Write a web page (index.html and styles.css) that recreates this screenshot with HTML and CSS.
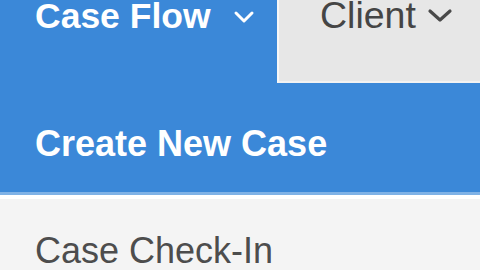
FILE: index.html
```html
<!DOCTYPE html>
<html>
<head>
<meta charset="utf-8">
<link rel="stylesheet" href="styles.css">
</head>
<body>
<div class="screen">
  <div class="tabs">
    <div class="tab tab-active">
      <span class="tab-label">Case Flow</span>
      <svg class="chev" width="22" height="14" viewBox="0 0 22 14"><path d="M3 3 L11 11 L19 3" fill="none" stroke="#ffffff" stroke-width="3" stroke-linecap="round" stroke-linejoin="round"/></svg>
    </div>
    <div class="tab tab-idle">
      <span class="tab-label">Client</span>
      <svg class="chev" width="26" height="16" viewBox="0 0 26 16"><path d="M3 3 L13 12 L23 3" fill="none" stroke="#4a4a4a" stroke-width="3.2" stroke-linecap="round" stroke-linejoin="round"/></svg>
    </div>
  </div>
  <div class="menu-item menu-active">Create New Case</div>
  <div class="menu-item menu-plain">Case Check-In</div>
</div>
</body>
</html>
```
FILE: styles.css
```css
html, body {
  margin: 0;
  padding: 0;
  background: #f4f4f4;
}
.screen {
  width: 480px;
  height: 270px;
  overflow: hidden;
  font-family: "Liberation Sans", Arial, sans-serif;
  background: #f4f4f4;
}
.tabs {
  display: flex;
  height: 85px;
  background: #3b88d8;
}
.tab {
  display: flex;
  align-items: flex-start;
  box-sizing: border-box;
}
.tab-label {
  font-size: 35px;
  line-height: 32px;
}
.tab-active {
  width: 277px;
  padding-left: 35px;
  color: #ffffff;
  gap: 22px;
}
.tab-active .tab-label {
  font-weight: bold;
  font-size: 35.5px;
}
.tab-active .chev {
  margin-top: 10px;
}
.tab-idle {
  flex: 1;
  height: 83px;
  padding-left: 41px;
  background: #e7e7e7;
  border-left: 2px solid #f7f7f7;
  border-bottom: 2px solid #f2f2f2;
  color: #454545;
  gap: 11px;
}
.tab-idle .tab-label {
  font-size: 37.5px;
  margin-top: -1px;
}
.tab-idle .chev {
  margin-top: 8px;
}
.menu-item {
  box-sizing: border-box;
  padding-left: 35px;
  line-height: 32px;
}
.menu-active {
  height: 114px;
  padding-top: 43px;
  background: #3b88d8;
  color: #ffffff;
  font-size: 36px;
  font-weight: bold;
  border-bottom: 4px solid #ffffff;
  box-shadow: inset 0 -3px 0 #7fb2e6;
}
.menu-plain {
  padding-top: 36px;
  font-size: 36px;
  color: #4d4d4d;
  background: #f4f4f4;
}
```
